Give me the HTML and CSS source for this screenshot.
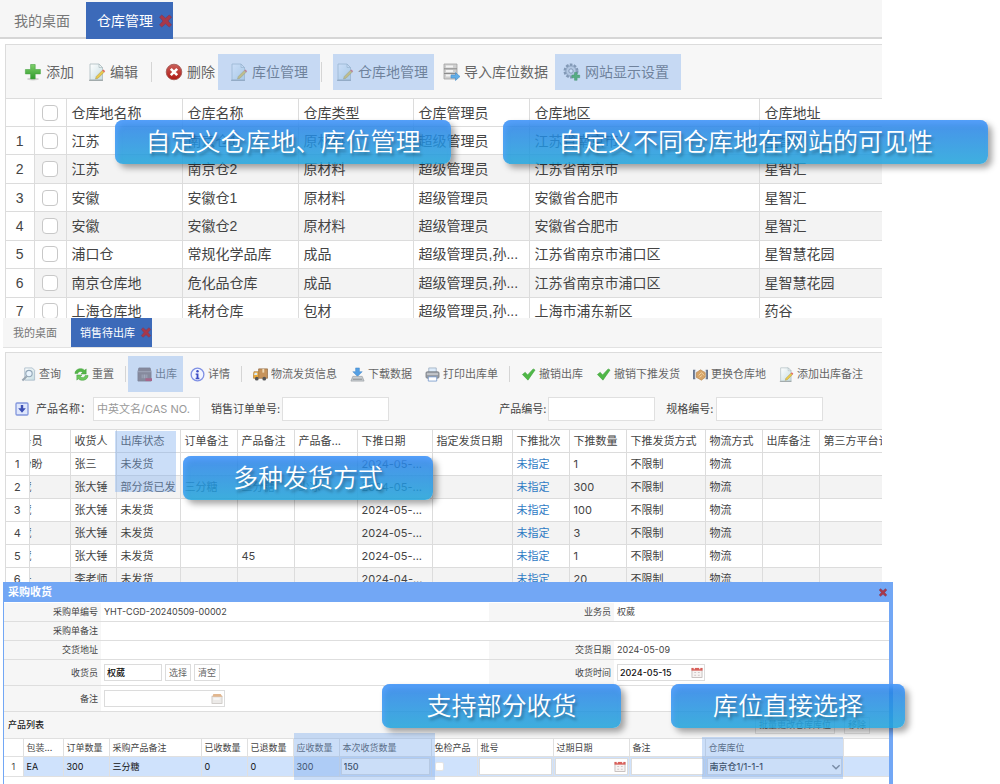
FILE: index.html
```html
<!DOCTYPE html>
<html lang="zh-CN">
<head>
    <meta charset="UTF-8">
    <meta name="viewport" content="width=device-width, initial-scale=1.0">
    <title>仓库管理</title>
    <link rel="stylesheet" href="styles.css">
</head>
<body>
    <!-- 图标 -->
    <svg class="sprite" aria-hidden="true">
        <defs>
            <linearGradient id="g-green" x1="0" y1="0" x2="0" y2="1"><stop offset="0" stop-color="#7fd06a"/><stop offset="1" stop-color="#2f9a2c"/></linearGradient>
            <linearGradient id="g-red" x1="0" y1="0" x2="0" y2="1"><stop offset="0" stop-color="#c9605a"/><stop offset="1" stop-color="#b01814"/></linearGradient>
            <linearGradient id="g-page" x1="0" y1="0" x2="1" y2="1"><stop offset="0" stop-color="#fff"/><stop offset="1" stop-color="#c6dde2"/></linearGradient>
        </defs>
        <symbol id="i-add" viewBox="0 0 18 18">
            <ellipse cx="9" cy="16" rx="6" ry="1.4" fill="#000" opacity=".15"/>
            <path d="M6.6 1.5h4.6v5h5.2v4.4h-5.2v5H6.6v-5H1.4V6.5h5.2z" fill="url(#g-green)" stroke="#4aa545" stroke-width=".6"/>
        </symbol>
        <symbol id="i-edit" viewBox="0 0 18 18">
            <path d="M2 1h9l3.5 3.5V17H2z" fill="url(#g-page)" stroke="#b3c1c4" stroke-width=".9"/>
            <path d="M11 1v3.5h3.5z" fill="#eef4f5" stroke="#a3b3b6" stroke-width=".6"/>
            <path d="M1 17.3h14" stroke="#8d9698" stroke-width=".9"/>
            <path d="M7.5 16l.8-2.6 6-6 1.8 1.8-6 6z" fill="#e9c94c" stroke="#a4944e" stroke-width=".5"/>
            <path d="M14.3 7.4l1.1-1 1.8 1.8-1.1 1z" fill="#e4645e"/>
        </symbol>
        <symbol id="i-del" viewBox="0 0 18 18">
            <circle cx="9" cy="9" r="7.8" fill="url(#g-red)" stroke="#9d5550" stroke-width=".8"/>
            <path d="M5.8 5.8l6.4 6.4M12.2 5.8l-6.4 6.4" stroke="#fff" stroke-width="2.6"/>
        </symbol>
        <symbol id="i-import" viewBox="0 0 18 18">
            <path d="M2 1h13v15H2z" fill="#cfcfcf" stroke="#a2a2a2" stroke-width=".8"/>
            <path d="M4 3.5h7M4 8h7M4 12.5h5" stroke="#f4f4f4" stroke-width="2"/>
            <path d="M2 5.8h13M2 10.5h13" stroke="#8b8b8b"/>
            <path d="M9 12h4.500V9.600L18 13.500l-4.500 4V15H9z" fill="#62aee8" stroke="#4a8fca" stroke-width=".6"/>
        </symbol>
        <symbol id="i-gear" viewBox="0 0 18 18">
            <circle cx="8" cy="8" r="6.200" fill="#ccd0d4" stroke="#868c92" stroke-width="2.600" stroke-dasharray="2.600 1.300"/>
            <circle cx="8" cy="8" r="5" fill="#d7dadd" stroke="#979ca1" stroke-width=".8"/>
            <circle cx="8" cy="8" r="2.200" fill="#fff" stroke="#868c92"/>
            <path d="M11.500 9.500h2.600v2.600h2.600v2.600h-2.600v2.600h-2.600v-2.600H8.900v-2.600h2.600z" fill="#3cae3c" stroke="#2b842b" stroke-width=".5"/>
        </symbol>
        <symbol id="i-close" viewBox="0 0 14 14">
            <path d="M1 3l2.300-2L7 4.200 10.700 1 13 3 9.600 7l3.400 4-2.300 2L7 9.800 3.300 13 1 11l3.400-4z" fill="#a8384a" stroke="#7c3a5a" stroke-width=".7"/>
        </symbol>
        <symbol id="i-search" viewBox="0 0 16 16">
            <path d="M4 1h8l2.500 2.500V14H4z" fill="url(#g-page)" stroke="#a9bac8" stroke-width=".9"/>
            <circle cx="8.500" cy="7" r="3.400" fill="#e9f4fd" stroke="#92a6b7" stroke-width="1.200"/>
            <path d="M6 10l-4.500 4.500" stroke="#9aa6b1" stroke-width="2.200"/>
        </symbol>
        <symbol id="i-refresh" viewBox="0 0 16 16">
            <path d="M1 7c0-5 7-7 10.500-3.500L13 2v5.500H7.500L9.300 5.700C7 4 4.500 5 4 7z" fill="#55b748" stroke="#3f9a3a" stroke-width=".5"/>
            <path d="M15 9c0 5-7 7-10.500 3.500L3 14V8.500h5.500l-1.800 1.800C9 12 11.500 11 12 9z" fill="#6cc75c" stroke="#3f9a3a" stroke-width=".5"/>
        </symbol>
        <symbol id="i-box" viewBox="0 0 16 16">
            <path d="M2 1h12l1 4v10H1V5z" fill="#8d7468" stroke="#7d6a62" stroke-width=".8"/>
            <path d="M1 5h14" stroke="#b7a397"/>
            <path d="M5 8h1v4H5zM7 8h2v4H7zM10 8h1v4h-1z" fill="#b9a69a"/>
            <path d="M9 12h7v3H9z" fill="#c13a4a"/>
        </symbol>
        <symbol id="i-info" viewBox="0 0 16 16">
            <circle cx="8" cy="8" r="6.800" fill="#f2f5ff" stroke="#7f90e4" stroke-width="1.400"/>
            <circle cx="8" cy="4.600" r="1.300" fill="#3c4cc4"/>
            <path d="M6 7h3v4.500h1V13H6v-1.500h1V8.300H6z" fill="#3c4cc4"/>
        </symbol>
        <symbol id="i-truck" viewBox="0 0 16 16">
            <path d="M6 2h9.500v10H6z" fill="#c7935a" stroke="#94704a" stroke-width=".8"/>
            <path d="M10 2h2v4h-2z" fill="#efd9b4"/>
            <path d="M1 5h5v7H.5V8z" fill="#eba93c" stroke="#a87a38" stroke-width=".7"/>
            <path d="M1.800 6h2.700v2.500H1.200z" fill="#d5ebf7"/>
            <circle cx="4" cy="12.500" r="2" fill="#555"/><circle cx="12" cy="12.500" r="2" fill="#555"/>
        </symbol>
        <symbol id="i-down" viewBox="0 0 16 16">
            <path d="M6 1h4v4h3L8 10 3 5h3z" fill="#54a0e4" stroke="#3a7fc2" stroke-width=".5"/>
            <path d="M3 10h10l2 5H1z" fill="#c9ced2" stroke="#9ca2a7" stroke-width=".8"/>
            <path d="M3 13h10" stroke="#83898e"/>
        </symbol>
        <symbol id="i-print" viewBox="0 0 16 16">
            <path d="M4 1h8v5H4z" fill="#dcebfa" stroke="#98aabe" stroke-width=".8"/>
            <rect x="1" y="5" width="14" height="7" rx="1.500" fill="#999ea5" stroke="#70757c" stroke-width=".7"/>
            <path d="M2 7.500h12" stroke="#d5d8db" stroke-width="1.400"/>
            <path d="M3.500 10.500h9V15h-9z" fill="#fff" stroke="#6a90c8" stroke-width=".8"/>
        </symbol>
        <symbol id="i-check" viewBox="0 0 16 16">
            <path d="M1.500 8l3-2.300L7 8.500 13 2l2 1.200L7.400 14z" fill="#4fb846" stroke="#3f9e3a" stroke-width=".6"/>
        </symbol>
        <symbol id="i-swap" viewBox="0 0 16 16">
            <path d="M0 3h2.500v10H0zM13.500 3H16v10h-2.500z" fill="#6a7790"/>
            <path d="M2 4h2v8H2zM12 4h2v8h-2z" fill="#dfe3ea"/>
            <path d="M3.500 6L8 3l5 3v5l-4 3-5.500-3z" fill="#d6a469" stroke="#b58550" stroke-width=".7"/>
            <path d="M6 9l3-3 3 3M7 11l2.500-2" stroke="#f3d6a6" fill="none"/>
        </symbol>
        <symbol id="i-toggle" viewBox="0 0 14 14">
            <rect x="1" y="1" width="12" height="12" rx="1" fill="#dfe7fc" stroke="#8296dc" stroke-width="1.300"/>
            <path d="M5.800 3h2.400v3.200h2.600L7 10.800 3.200 6.200h2.600z" fill="#3c4fb4"/>
        </symbol>
        <symbol id="i-cal" viewBox="0 0 12 12">
            <rect x=".5" y="1.500" width="11" height="10" fill="#f7f3f2" stroke="#b7b0ae" stroke-width=".8"/>
            <path d="M0 1h12v3H0z" fill="#d9605a"/>
            <path d="M3 0v2.500M9 0v2.500" stroke="#fff" stroke-width="1.200"/>
            <path d="M3 6h2M7 6h2M3 9h2M7 9h2" stroke="#cbc4c4"/>
        </symbol>
        <symbol id="i-pick" viewBox="0 0 12 12">
            <rect x=".5" y="3.500" width="11" height="8" fill="#eceae8" stroke="#c5c1bd" stroke-width=".8"/>
            <path d="M2 1h8l2 3H1z" fill="#e2b78f"/>
            <path d="M2 6.500h7" stroke="#fff" stroke-width="1.200"/>
        </symbol>
    </svg>

    <!-- 仓库管理 -->
    <section class="shot shot-stock">
        <div class="crop">
            <nav class="tabs">
                <a class="tab" href="#">我的桌面</a>
                <a class="tab active" href="#">仓库管理<svg class="close"><use href="#i-close"/></svg></a>
            </nav>
            <div class="panel">
                <div class="toolbar">
                    <button class="tool"><svg><use href="#i-add"/></svg>添加</button>
                    <button class="tool"><svg><use href="#i-edit"/></svg>编辑</button>
                    <span class="sep"></span>
                    <button class="tool"><svg><use href="#i-del"/></svg>删除</button>
                    <button class="tool mark mark-place"><svg><use href="#i-edit"/></svg>库位管理</button>
                    <span class="sep"></span>
                    <button class="tool mark mark-stock"><svg><use href="#i-edit"/></svg>仓库地管理</button>
                    <button class="tool"><svg><use href="#i-import"/></svg>导入库位数据</button>
                    <button class="tool mark mark-site"><svg><use href="#i-gear"/></svg>网站显示设置</button>
                </div>
                <table class="grid">
                    <colgroup>
                        <col class="w-no"><col class="w-check"><col class="w-name"><col class="w-name"><col class="w-type"><col class="w-name"><col class="w-area"><col>
                    </colgroup>
                    <thead>
                        <tr><th></th><th class="check"><input type="checkbox" aria-label="全选"></th><th>仓库地名称</th><th>仓库名称</th><th>仓库类型</th><th>仓库管理员</th><th>仓库地区</th><th>仓库地址</th></tr>
                    </thead>
                    <tbody>
                        <tr><td class="no">1</td><td class="check"><input type="checkbox" aria-label="第1行"></td><td>江苏</td><td>南京仓1</td><td>原材料</td><td>超级管理员</td><td>江苏省南京市</td><td>星智汇</td></tr>
                        <tr><td class="no">2</td><td class="check"><input type="checkbox" aria-label="第2行"></td><td>江苏</td><td>南京仓2</td><td>原材料</td><td>超级管理员</td><td>江苏省南京市</td><td>星智汇</td></tr>
                        <tr><td class="no">3</td><td class="check"><input type="checkbox" aria-label="第3行"></td><td>安徽</td><td>安徽仓1</td><td>原材料</td><td>超级管理员</td><td>安徽省合肥市</td><td>星智汇</td></tr>
                        <tr><td class="no">4</td><td class="check"><input type="checkbox" aria-label="第4行"></td><td>安徽</td><td>安徽仓2</td><td>原材料</td><td>超级管理员</td><td>安徽省合肥市</td><td>星智汇</td></tr>
                        <tr><td class="no">5</td><td class="check"><input type="checkbox" aria-label="第5行"></td><td>浦口仓</td><td>常规化学品库</td><td>成品</td><td>超级管理员,孙...</td><td>江苏省南京市浦口区</td><td>星智慧花园</td></tr>
                        <tr><td class="no">6</td><td class="check"><input type="checkbox" aria-label="第6行"></td><td>南京仓库地</td><td>危化品仓库</td><td>成品</td><td>超级管理员,孙...</td><td>江苏省南京市浦口区</td><td>星智慧花园</td></tr>
                        <tr><td class="no">7</td><td class="check"><input type="checkbox" aria-label="第7行"></td><td>上海仓库地</td><td>耗材仓库</td><td>包材</td><td>超级管理员,孙...</td><td>上海市浦东新区</td><td>药谷</td></tr>
                    </tbody>
                </table>
            </div>
        </div>
        <p class="callout callout-custom">自定义仓库地、库位管理</p>
        <p class="callout callout-visible">自定义不同仓库地在网站的可见性</p>
    </section>

    <!-- 销售待出库 -->
    <section class="shot shot-sale">
        <div class="crop">
            <nav class="tabs">
                <a class="tab" href="#">我的桌面</a>
                <a class="tab active" href="#">销售待出库<svg class="close"><use href="#i-close"/></svg></a>
            </nav>
            <div class="panel">
                <div class="toolbar">
                    <button class="tool"><svg><use href="#i-search"/></svg>查询</button>
                    <button class="tool"><svg><use href="#i-refresh"/></svg>重置</button>
                    <span class="sep"></span>
                    <button class="tool mark"><svg><use href="#i-box"/></svg>出库</button>
                    <button class="tool"><svg><use href="#i-info"/></svg>详情</button>
                    <span class="sep"></span>
                    <button class="tool"><svg><use href="#i-truck"/></svg>物流发货信息</button>
                    <button class="tool"><svg><use href="#i-down"/></svg>下载数据</button>
                    <button class="tool"><svg><use href="#i-print"/></svg>打印出库单</button>
                    <span class="sep"></span>
                    <button class="tool"><svg><use href="#i-check"/></svg>撤销出库</button>
                    <button class="tool"><svg><use href="#i-check"/></svg>撤销下推发货</button>
                    <button class="tool"><svg><use href="#i-swap"/></svg>更换仓库地</button>
                    <button class="tool"><svg><use href="#i-edit"/></svg>添加出库备注</button>
                </div>
                <form class="filter">
                    <svg class="toggle"><use href="#i-toggle"/></svg>
                    <label>产品名称：<input type="text" placeholder="中英文名/CAS NO."></label>
                    <label>销售订单单号:<input type="text"></label>
                    <label class="apart">产品编号:<input type="text"></label>
                    <label>规格编号:<input type="text"></label>
                </form>
                <table class="grid">
                    <colgroup>
                        <col class="w-23"><col class="w-41"><col class="w-46"><col class="w-64"><col class="w-57"><col class="w-57"><col class="w-63"><col class="w-75"><col class="w-80"><col class="w-57"><col class="w-57"><col class="w-79"><col class="w-57"><col class="w-57"><col>
                    </colgroup>
                    <thead>
                        <tr><th></th><th class="scrolled">业务员</th><th>收货人</th><th>出库状态</th><th>订单备注</th><th>产品备注</th><th>产品备...</th><th>下推日期</th><th>指定发货日期</th><th>下推批次</th><th>下推数量</th><th>下推发货方式</th><th>物流方式</th><th>出库备注</th><th>第三方平台订单</th></tr>
                    </thead>
                    <tbody>
                        <tr><td class="no">1</td><td class="scrolled">孙盼盼</td><td>张三</td><td>未发货</td><td></td><td></td><td></td><td>2024-05-...</td><td></td><td><a href="#">未指定</a></td><td>1</td><td>不限制</td><td>物流</td><td></td><td></td></tr>
                        <tr><td class="no">2</td><td class="scrolled">权葳</td><td>张大锤</td><td>部分货已发</td><td>三分糖</td><td>三分糖</td><td>少冰</td><td>2024-05-...</td><td></td><td><a href="#">未指定</a></td><td>300</td><td>不限制</td><td>物流</td><td></td><td></td></tr>
                        <tr><td class="no">3</td><td class="scrolled">权葳</td><td>张大锤</td><td>未发货</td><td></td><td></td><td></td><td>2024-05-...</td><td></td><td><a href="#">未指定</a></td><td>100</td><td>不限制</td><td>物流</td><td></td><td></td></tr>
                        <tr><td class="no">4</td><td class="scrolled">权葳</td><td>张大锤</td><td>未发货</td><td></td><td></td><td></td><td>2024-05-...</td><td></td><td><a href="#">未指定</a></td><td>3</td><td>不限制</td><td>物流</td><td></td><td></td></tr>
                        <tr><td class="no">5</td><td class="scrolled">权葳</td><td>张大锤</td><td>未发货</td><td></td><td>45</td><td></td><td>2024-05-...</td><td></td><td><a href="#">未指定</a></td><td>1</td><td>不限制</td><td>物流</td><td></td><td></td></tr>
                        <tr><td class="no">6</td><td class="scrolled">李丹</td><td>李老师</td><td>未发货</td><td></td><td></td><td></td><td>2024-04-...</td><td></td><td><a href="#">未指定</a></td><td>20</td><td>不限制</td><td>物流</td><td></td><td></td></tr>
                    </tbody>
                </table>
            </div>
        </div>
        <div class="spot spot-status"></div>
        <p class="callout callout-ship">多种发货方式</p>
    </section>

    <!-- 采购收货 -->
    <section class="shot shot-receive">
        <div class="dialog">
            <header class="dialog-head">采购收货<button class="dialog-close" aria-label="关闭"><svg><use href="#i-close"/></svg></button></header>
            <div class="dialog-body">
                <div class="fields">
                    <span class="name">采购单编号</span><span class="value">YHT-CGD-20240509-00002</span>
                    <span class="name">业务员</span><span class="value">权葳</span>
                    <span class="name">采购单备注</span><span class="value wide"></span>
                    <span class="name">交货地址</span><span class="value"></span>
                    <span class="name">交货日期</span><span class="value">2024-05-09</span>
                    <label class="name tall" for="receiver">收货员</label>
                    <span class="value tall"><input id="receiver" class="box box-short" type="text" value="权葳"><button class="small">选择</button><button class="small">清空</button></span>
                    <label class="name tall" for="time">收货时间</label>
                    <span class="value tall"><span class="picker"><input id="time" class="box" type="text" value="2024-05-15"><svg><use href="#i-cal"/></svg></span></span>
                    <label class="name tall" for="remark">备注</label>
                    <span class="value wide tall"><span class="picker picker-long"><input id="remark" class="box" type="text"><svg><use href="#i-pick"/></svg></span></span>
                </div>
                <div class="list-head">
                    <h2>产品列表</h2>
                    <button class="small">批量更改仓库库位</button>
                    <button class="small">移除</button>
                </div>
                <table class="grid">
                    <colgroup>
                        <col class="w-19"><col class="w-40"><col class="w-46"><col class="w-92"><col class="w-46"><col class="w-46"><col class="w-46"><col class="w-92"><col class="w-46"><col class="w-76"><col class="w-76"><col class="w-76"><col class="w-138"><col>
                    </colgroup>
                    <thead>
                        <tr><th></th><th>包装...</th><th>订单数量</th><th>采购产品备注</th><th>已收数量</th><th>已退数量</th><th>应收数量</th><th>本次收货数量</th><th>免检产品</th><th>批号</th><th>过期日期</th><th>备注</th><th>仓库库位</th><th></th></tr>
                    </thead>
                    <tbody>
                        <tr>
                            <td class="no">1</td><td>EA</td><td>300</td><td>三分糖</td><td>0</td><td>0</td><td>300</td>
                            <td class="edit"><input class="box" type="text" value="150" aria-label="本次收货数量"></td>
                            <td class="edit"><input type="checkbox" aria-label="免检产品"></td>
                            <td class="edit"><input class="box" type="text" aria-label="批号"></td>
                            <td class="edit"><span class="picker"><input class="box" type="text" aria-label="过期日期"><svg><use href="#i-cal"/></svg></span></td>
                            <td class="edit"><input class="box" type="text" aria-label="备注"></td>
                            <td class="edit"><span class="choose"><select class="box" aria-label="仓库库位"><option>南京仓1/1-1-1</option></select><svg viewBox="0 0 8 5"><path d="M1 1l3 3 3-3" fill="none" stroke="#777" stroke-width="1.200"/></svg></span></td>
                            <td></td>
                        </tr>
                    </tbody>
                </table>
            </div>
        </div>
        <div class="spot spot-amount"></div>
        <div class="spot spot-place"></div>
        <p class="callout callout-part">支持部分收货</p>
        <p class="callout callout-place">库位直接选择</p>
    </section>
</body>
</html>
```
FILE: styles.css
```css
* {
    box-sizing: border-box;
}
body {
    margin: 0;
    background: #fff;
    color: #444;
    font-family: "Liberation Sans", "Noto Sans CJK SC", sans-serif;
    font-size: 14px;
    line-height: 20px;
}
button, input, select {
    font: inherit;
    color: inherit;
}
a {
    color: inherit;
    text-decoration: none;
}
.sprite {
    display: block;
    width: 0;
    height: 0;
}
.shot {
    position: relative;
    padding-right: 118px;
}
.crop {
    overflow: hidden;
}

/* 标签栏 */
.tabs {
    display: flex;
    background: #f6f6f6;
    border-bottom: 2px solid #d6d6d6;
}
.tab {
    display: flex;
    align-items: center;
    color: #777;
}
.tab.active {
    background: #3c6ab9;
    color: #fff;
}

/* 工具栏 */
.panel {
    border-top: 1px solid #dcdcdc;
    border-left: 1px solid #dcdcdc;
    background: #f7f7f7;
}
.toolbar {
    display: flex;
    align-items: center;
}
.tool {
    position: relative;
    display: flex;
    flex: none;
    align-items: center;
    border: 0;
    background: none;
    color: #666;
    white-space: nowrap;
}
.sep {
    width: 1px;
    background: #d5d5d5;
}
.mark::after {
    content: "";
    position: absolute;
    background: rgba(124, 172, 237, 0.4);
}

/* 表格 */
.grid {
    width: 100%;
    table-layout: fixed;
    border-collapse: collapse;
    background: #fff;
}
.grid th,
.grid td {
    padding: 0 0 0 5px;
    border: 1px solid #dcdcdc;
    border-left: 0;
    font-weight: normal;
    text-align: left;
    white-space: nowrap;
    overflow: hidden;
}
.grid th:last-child,
.grid td:last-child {
    border-right: 0;
}
.grid tbody tr:nth-child(even) {
    background: #f3f3f3;
}
.grid .no,
.grid .check {
    padding: 0;
    text-align: center;
}
.grid .no {
    background: #fff;
}

/* 仓库管理 */
.shot-stock .crop {
    height: 318px;
}
.shot-stock .tabs {
    height: 39px;
    padding-top: 2px;
    margin-bottom: 5px;
}
.shot-stock .tab {
    height: 37px;
    padding-left: 14px;
    margin-right: 16px;
}
.shot-stock .tab.active {
    padding-left: 11px;
}
.shot-stock .close {
    width: 15px;
    height: 14px;
    margin-left: 5px;
}
.shot-stock .panel {
    margin-left: 5px;
}
.shot-stock .toolbar {
    height: 53px;
    padding-left: 11px;
}
.shot-stock .tool {
    gap: 4px;
    height: 28px;
    padding: 0 7px;
}
.shot-stock .tool svg {
    width: 18px;
    height: 18px;
}
.shot-stock .sep {
    height: 20px;
    margin: 0 6px;
}
.shot-stock .mark {
    margin-left: 1px;
}
.mark-place::after {
    inset: -4px -5px -4px -5px;
}
.mark-stock::after {
    inset: -4px 1px -4px 4px;
}
.mark-site::after {
    inset: -4px -5px -4px -1px;
}
.shot-stock .grid {
    height: 228px;
}
.shot-stock .grid tr {
    height: 28px;
}
.w-no { width: 28px; }
.w-check { width: 32px; }
.w-name { width: 116px; }
.w-type { width: 115px; }
.w-area { width: 230px; }
.check input {
    appearance: none;
    display: block;
    width: 16px;
    height: 16px;
    margin: 0 auto;
    border: 1px solid #c8c8c8;
    border-radius: 4px;
    background: #fff;
}

/* 销售待出库 */
.shot-sale,
.shot-receive {
    font-family: Inter, "Noto Sans CJK SC", sans-serif;
}
.shot-sale {
    font-size: 11px;
    line-height: 16px;
}
.shot-sale .crop {
    height: 264px;
    margin-left: 3px;
}
.shot-sale .tabs {
    height: 30px;
    margin-bottom: 4px;
    border-bottom: 1px solid #e2e2e2;
}
.shot-sale .tab {
    padding-left: 10px;
    margin-right: 14px;
}
.shot-sale .tab.active {
    padding-left: 9px;
}
.shot-sale .close {
    width: 12px;
    height: 11px;
    margin-left: 5px;
}
.shot-sale .panel {
    margin-left: 2px;
}
.shot-sale .toolbar {
    height: 42px;
    padding-left: 10px;
    gap: 3px;
}
.shot-sale .tool {
    gap: 3px;
    height: 28px;
    padding: 0 5px;
}
.shot-sale .tool svg {
    width: 15px;
    height: 15px;
}
.shot-sale .sep {
    height: 16px;
    margin: 0 3px;
}
.shot-sale .mark::after {
    inset: -4px -1px -4px -4px;
}
.filter {
    display: flex;
    align-items: center;
    gap: 11px;
    height: 34px;
    padding: 0 0 6px 9px;
}
.filter .toggle {
    width: 14px;
    height: 14px;
    margin-right: -4px;
}
.filter label {
    display: flex;
    align-items: center;
    gap: 2px;
    white-space: nowrap;
}
.filter .apart {
    margin-left: 99px;
}
.filter input {
    width: 107px;
    height: 24px;
    padding: 0 3px;
    border: 1px solid #e0e0e0;
    background: #fff;
    font-size: 11px;
}
.filter input::placeholder {
    color: #999;
}
.shot-sale .grid {
    height: 162px;
}
.shot-sale .grid tr {
    height: 23px;
}
.shot-sale .grid th,
.shot-sale .grid td {
    padding-left: 4px;
}
.shot-sale .grid .no {
    padding: 0;
}
.shot-sale .grid .scrolled {
    padding: 0;
    text-indent: -20px;
}
.shot-sale .grid a {
    color: #2f7bc4;
}
.w-19 { width: 19px; }
.w-23 { width: 23px; }
.w-40 { width: 40px; }
.w-41 { width: 41px; }
.w-46 { width: 46px; }
.w-57 { width: 57px; }
.w-63 { width: 63px; }
.w-64 { width: 64px; }
.w-75 { width: 75px; }
.w-76 { width: 76px; }
.w-79 { width: 79px; }
.w-80 { width: 80px; }
.w-92 { width: 92px; }
.w-138 { width: 138px; }

/* 采购收货 */
.shot-receive {
    padding: 0 107px 0 3px;
    font-size: 9px;
    line-height: 14px;
}
.dialog {
    min-height: 202px;
    border: 1px solid #72a7f5;
    border-width: 0 4px 0 1px;
    background: #fff;
}
.dialog-head {
    display: flex;
    justify-content: space-between;
    align-items: center;
    height: 20px;
    padding-left: 4px;
    background: #72a7f5;
    color: #fff;
    font-size: 11px;
    font-weight: bold;
}
.dialog-close {
    display: flex;
    padding: 0 1px;
    border: 0;
    background: none;
}
.dialog-close svg {
    width: 10px;
    height: 9px;
}
.fields {
    display: grid;
    grid-template-columns: 97px 388px 125px 1fr;
    padding-top: 1px;
    color: #444;
}
.name,
.value {
    display: flex;
    align-items: center;
    height: 19px;
    border-bottom: 1px solid #dedede;
}
.name {
    justify-content: flex-end;
    padding-right: 3px;
    background: #f6f6f6;
}
.value {
    gap: 3px;
    padding-left: 3px;
}
.wide {
    grid-column: span 3;
}
.tall {
    height: 26px;
}
.box {
    width: 100%;
    height: 17px;
    padding: 0 2px;
    border: 1px solid #dcdcdc;
    border-radius: 0;
    background: #fff;
    color: #111;
    font-weight: 500;
}
.box-short {
    width: 58px;
}
.small {
    height: 17px;
    padding: 0 3px;
    border: 1px solid #dcdcdc;
    background: #fff;
    color: #666;
    line-height: 14px;
}
.picker {
    display: flex;
    position: relative;
    width: 88px;
}
.picker-long {
    width: 121px;
}
.picker svg {
    position: absolute;
    right: 2px;
    top: 3px;
    width: 12px;
    height: 11px;
}
.list-head {
    display: flex;
    align-items: center;
    gap: 9px;
    height: 26px;
    padding: 0 19px 0 4px;
    background: #f6f6f6;
}
.list-head h2 {
    margin: 0 auto 0 0;
    color: #222;
    font-size: 9px;
    font-weight: 500;
}
.list-head .small {
    background: none;
}
.shot-receive .grid {
    height: 38px;
    color: #444;
}
.shot-receive .grid thead tr {
    height: 18px;
}
.shot-receive .grid th,
.shot-receive .grid td {
    padding-left: 3px;
    border-color: #e0e0e0;
}
.shot-receive .grid tbody tr {
    height: 20px;
    background: #cfe2fc;
    color: #111;
    font-weight: 500;
}
.shot-receive .grid .no {
    padding: 0;
    color: #444;
    font-weight: normal;
}
.shot-receive .grid .edit {
    padding: 0 1px;
}
.edit .picker {
    width: auto;
}
.edit input[type="checkbox"] {
    appearance: none;
    display: block;
    width: 9px;
    height: 9px;
    margin: 0 2px;
    border: 1px solid #e4e4e4;
    border-radius: 2px;
    background: #fff;
}
.choose {
    display: flex;
    position: relative;
}
.choose select {
    appearance: none;
}
.choose svg {
    position: absolute;
    right: 1px;
    top: 6px;
    width: 10px;
    height: 6px;
}

/* 高亮区域与说明 */
.spot {
    position: absolute;
    background: rgba(124, 172, 237, 0.4);
}
.spot-status {
    left: 115px;
    top: 113px;
    width: 61px;
    height: 61px;
}
.spot-amount {
    left: 294px;
    top: 151px;
    width: 141px;
    height: 47px;
}
.spot-place {
    left: 702px;
    top: 155px;
    width: 141px;
    height: 42px;
}
.callout {
    position: absolute;
    display: flex;
    align-items: center;
    justify-content: center;
    height: 44px;
    margin: 0;
    padding-bottom: 5px;
    border-radius: 8px;
    background: linear-gradient(rgba(40, 126, 232, 0.85), rgba(29, 162, 217, 0.85));
    box-shadow: 4px 4px 6px rgba(0, 0, 0, 0.35), inset 2px 4px 5px rgba(90, 165, 255, 0.7);
    color: #fff;
    font-family: "Noto Sans CJK SC", sans-serif;
    font-size: 25px;
    font-weight: 350;
    line-height: 36px;
    text-shadow: 2px 3px 3px rgba(0, 0, 0, 0.3);
    white-space: nowrap;
}
.callout-custom {
    left: 115px;
    top: 120px;
    width: 336px;
}
.callout-visible {
    left: 503px;
    top: 120px;
    width: 485px;
}
.callout-ship {
    left: 183px;
    top: 138px;
    width: 250px;
}
.callout-part {
    left: 382px;
    top: 102px;
    width: 239px;
}
.callout-place {
    left: 671px;
    top: 102px;
    width: 234px;
}
```
